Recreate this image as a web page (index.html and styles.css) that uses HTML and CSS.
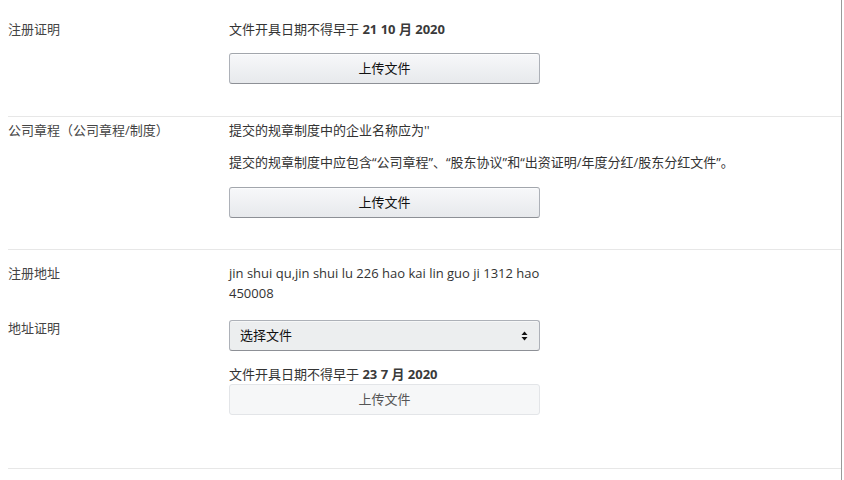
FILE: index.html
```html
<!DOCTYPE html>
<html lang="zh-CN">
<head>
<meta charset="utf-8">
<title>上传文件</title>
<link rel="stylesheet" href="styles.css">
</head>
<body>
<div class="page">
  <section class="section s1">
    <div class="row">
      <div class="label">注册证明</div>
      <div class="value">
        <div class="line">文件开具日期不得早于 <b>21 10 月 2020</b></div>
        <button class="btn btn-gap1" type="button">上传文件</button>
      </div>
    </div>
  </section>

  <section class="section s2">
    <div class="row">
      <div class="label">公司章程（公司章程/制度）</div>
      <div class="value">
        <div class="line">提交的规章制度中的企业名称应为''</div>
        <div class="line line-gap">提交的规章制度中应包含“公司章程”、“股东协议”和“出资证明/年度分红/股东分红文件”。</div>
        <button class="btn btn-gap2" type="button">上传文件</button>
      </div>
    </div>
  </section>

  <section class="section s3">
    <div class="row">
      <div class="label">注册地址</div>
      <div class="value">
        <div class="line">jin shui qu,jin shui lu 226 hao kai lin guo ji 1312 hao</div>
        <div class="line">450008</div>
      </div>
    </div>
    <div class="row row-gap">
      <div class="label">地址证明</div>
      <div class="value">
        <div class="select">
          <span>选择文件</span>
          <svg class="arrows" width="7" height="10" viewBox="0 0 7 10" aria-hidden="true">
            <path d="M3.5 0.5 L6.5 4 L0.5 4 Z" fill="#111"/>
            <path d="M3.5 9.5 L6.5 6 L0.5 6 Z" fill="#111"/>
          </svg>
        </div>
        <div class="line date-gap">文件开具日期不得早于 <b>23 7 月 2020</b></div>
        <button class="btn btn-disabled" type="button" disabled>上传文件</button>
      </div>
    </div>
  </section>
</div>
</body>
</html>
```

FILE: styles.css
```css
html, body {
  margin: 0;
  padding: 0;
  background: #ffffff;
}

body {
  font-family: "Open Sans", "Noto Sans CJK SC", "Noto Sans", sans-serif;
  font-size: 13px;
  color: #333333;
}

.page {
  margin-left: 8px;
  width: 833px;
  min-height: 480px;
  border-right: 1px solid #9a9a9a;
}

.section {
  border-bottom: 1px solid #e7e7e7;
}

.s1 {
  padding-top: 19px;
  padding-bottom: 32px;
}

.s2 {
  padding-top: 3px;
  padding-bottom: 31px;
}

.s3 {
  padding-top: 13px;
  padding-bottom: 53px;
}

.row {
  display: flex;
  align-items: flex-start;
}

.row-gap {
  margin-top: 15px;
}

.label {
  width: 221px;
  flex: none;
  line-height: 20px;
  color: #444444;
}

.value {
  width: 311px;
  flex: none;
  display: flex;
  flex-direction: column;
}

.line {
  line-height: 20px;
  white-space: nowrap;
  color: #333333;
}

.line b {
  font-weight: 700;
  color: #3a3a3a;
}

.line-gap {
  margin-top: 12px;
}

.btn {
  box-sizing: border-box;
  width: 311px;
  height: 31px;
  padding: 0 0 3px;
  border: 1px solid #adb1b8;
  border-top-color: #a2a6ac;
  border-bottom-color: #8d9096;
  border-radius: 3px;
  background: linear-gradient(to bottom, #f7f8fa, #e7e9ec);
  box-shadow: 0 1px 0 rgba(255, 255, 255, 0.6) inset;
  font-family: inherit;
  font-size: 13px;
  color: #111111;
  text-align: center;
}

.btn-gap1 {
  margin-top: 14px;
}

.btn-gap2 {
  margin-top: 15px;
}

.btn-disabled {
  background: #f6f7f8;
  border: 1px solid #e3e5e8;
  box-shadow: none;
  color: #555555;
}

.select {
  box-sizing: border-box;
  margin-top: 2px;
  width: 311px;
  height: 31px;
  display: flex;
  align-items: center;
  justify-content: space-between;
  padding: 0 11px 3px 10px;
  border: 1px solid #adb1b8;
  border-bottom-color: #8d9096;
  border-radius: 3px;
  background: #eceeef;
  box-shadow: 0 1px 0 rgba(255, 255, 255, 0.5) inset;
  color: #111111;
}

.arrows {
  display: block;
  margin-top: 3px;
}

.date-gap {
  margin-top: 13px;
}
```
